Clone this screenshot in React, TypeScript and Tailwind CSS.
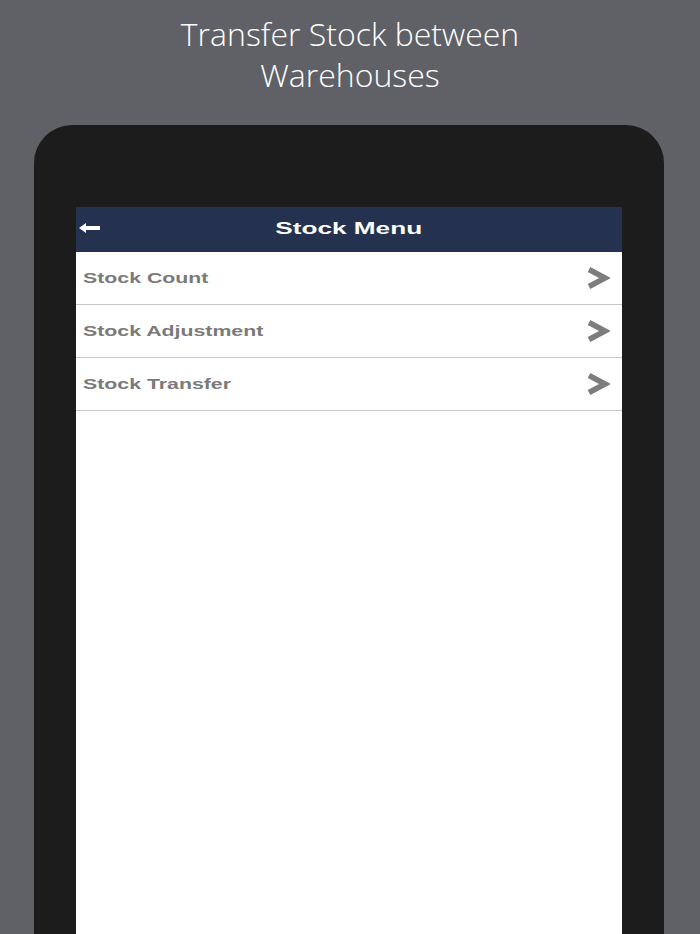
const items = ['Stock Count', 'Stock Adjustment', 'Stock Transfer']

function BackArrow() {
  return (
    <svg width="22" height="10" viewBox="0 0 22 10" className="block">
      <path d="M0 5 L7 0 L7 3 L21 3 L21 7 L7 7 L7 10 Z" fill="#ffffff" />
    </svg>
  )
}

function Chevron() {
  return (
    <svg width="24" height="24" viewBox="0 0 24 24" className="block">
      <polyline points="3,3.5 19,12 3,20.5" fill="none" stroke="#7d7d7d" strokeWidth="5.5" strokeLinejoin="miter" />
    </svg>
  )
}

export default function App() {
  return (
    <div className="h-[934px] overflow-hidden bg-[#606166] flex flex-col">
      {/* Caption */}
      <h1 className="pt-[13px] text-center text-[32px] leading-[41px] font-light text-white font-['Open_Sans',sans-serif]">
        Transfer Stock between
        <br />
        Warehouses
      </h1>

      {/* Device frame */}
      <div className="mt-[30px] ml-[34px] w-[630px] flex-1 bg-[#1c1c1c] rounded-t-[38px] pt-[82px] px-[42px] flex flex-col">
        <div className="flex-1 bg-white flex flex-col font-['Liberation_Sans',Arial,sans-serif]">
          <div className="h-[45px] bg-[#243250] relative flex items-center justify-center">
            <div className="absolute left-[3px] top-[16px]">
              <BackArrow />
            </div>
            <span className="inline-block scale-x-[1.54] text-[17px] font-bold text-white -mt-[2px]">
              Stock Menu
            </span>
          </div>

          {items.map((item) => (
            <div
              key={item}
              className="h-[53px] border-b border-[#c6c6c6] flex items-center justify-between pl-[7px] pr-[12px]"
            >
              <span className="inline-block origin-left scale-x-[1.42] text-[15px] font-bold text-[#7a7a7a]">
                {item}
              </span>
              <Chevron />
            </div>
          ))}
        </div>
      </div>
    </div>
  )
}
